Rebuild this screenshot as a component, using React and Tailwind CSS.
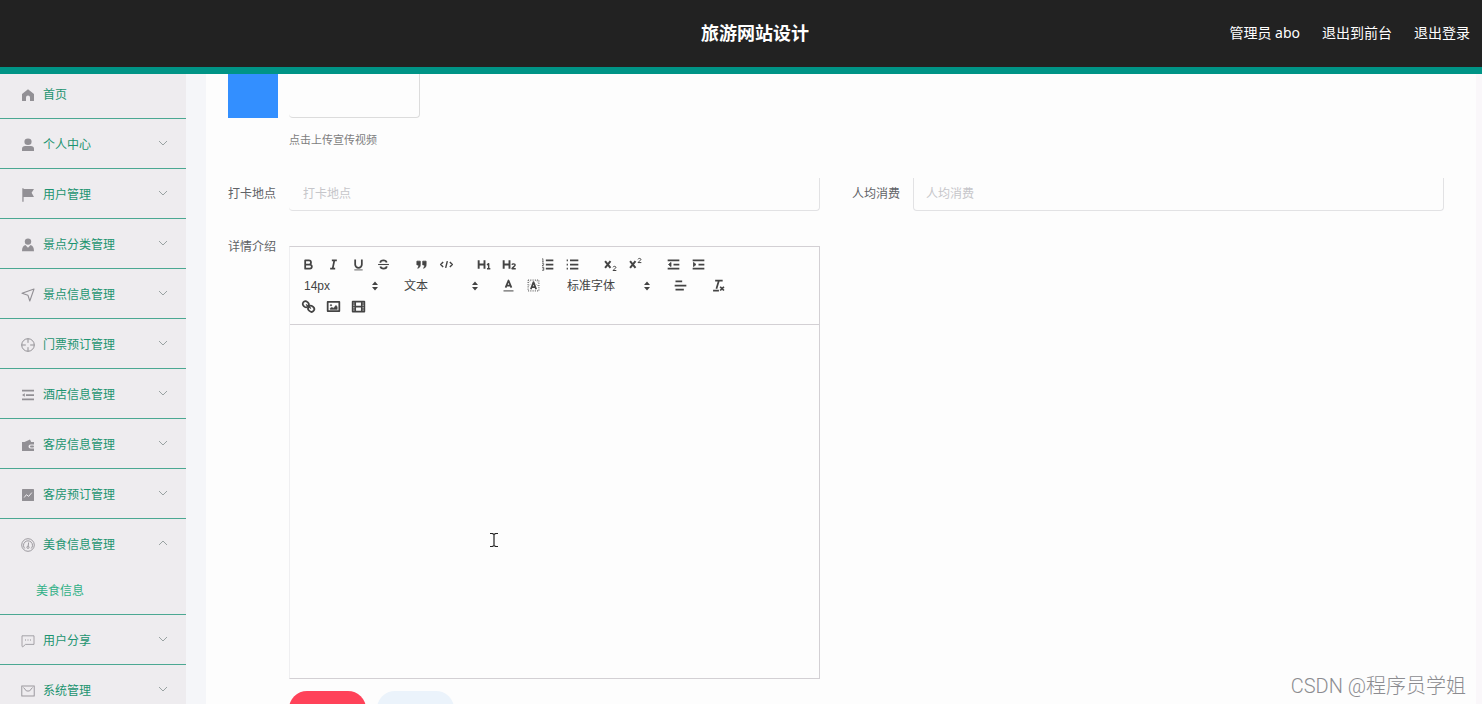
import React, { useState } from 'react';

const icons = {
  home: (
    <path d="M7 1.2 13 6v6.4a.6.6 0 0 1-.6.6H9V9.4a2 2 0 0 0-4 0V13H1.6a.6.6 0 0 1-.6-.6V6z" fill="currentColor" />
  ),
  user: (
    <g fill="currentColor">
      <ellipse cx="7" cy="3.8" rx="3.6" ry="3.2" />
      <path d="M1 13v-2.2C1 9 2.3 8 4.2 8h5.6C11.7 8 13 9 13 10.8V13z" />
    </g>
  ),
  flag: <path d="M1.3.3h1.3v.6h10.400L10.600 4.800l2.400 4.100h-10.400v4.900H1.300z" fill="currentColor" />,
  custom: (
    <g fill="currentColor">
      <circle cx="7" cy="3.600" r="3.200" />
      <path d="M4.400 7 7 9.800 9.600 7c2.200.6 3.400 2.600 3.400 6.300H1c0-3.700 1.200-5.700 3.400-6.300z" />
    </g>
  ),
  position: (
    <path d="M13 1 8.800 13 6.900 7.200 1 5.300z" fill="none" stroke="currentColor" strokeWidth="1.1" strokeLinejoin="round" />
  ),
  aim: (
    <g fill="none" stroke="currentColor" strokeWidth="1">
      <circle cx="7" cy="7" r="6.300" />
      <path d="M7 .8v4M7 9.200v4M.8 7h4M9.200 7h4" />
    </g>
  ),
  fold: (
    <g fill="currentColor">
      <path d="M1 1.800h12v1.700H1zM5 6.200h8v1.700H5zM1 10.500h12v1.700H1zM1 7l2.800-1.800v3.600z" />
    </g>
  ),
  wallet: (
    <g fill="currentColor">
      <path d="M1 4h2.500L9 1.500 10.200 4H13v2.500H9.500a2 2 0 0 0 0 4H13V13H1z" />
      <rect x="9" y="7.500" width="4" height="2" rx="1" />
    </g>
  ),
  chart: (
    <g>
      <rect x="1" y="1" width="12" height="12" rx="0.6" fill="currentColor" />
      <path d="M3.200 9.500 5.400 6.700 7.700 8.400 10.800 4.600" fill="none" stroke="#eeecef" strokeWidth="1" />
    </g>
  ),
  gauge: (
    <g fill="none" stroke="currentColor" strokeWidth="0.9">
      <circle cx="7" cy="7" r="6.300" />
      <path d="M3.800 10.500a4.500 4.500 0 1 1 6.400 0" />
      <path d="M7.600 4.500 7.200 8" />
      <circle cx="7" cy="9.300" r="1.100" />
    </g>
  ),
  chat: (
    <g fill="none" stroke="currentColor" strokeWidth="0.8">
      <path d="M1 1.800h12v8.600H4.500L1.800 12.800 1 12.400z" />
      <path d="M4 6h1M6.500 6h1M9 6h1" strokeWidth="1.200" />
    </g>
  ),
  mail: (
    <g fill="none" stroke="currentColor" strokeWidth="0.9">
      <rect x="0.800" y="2" width="12.400" height="10" />
      <path d="M2.500 3.500 5.500 7h3l3-3.500" />
    </g>
  ),
};

const menu = [
  { title: '首页', icon: 'home' },
  { title: '个人中心', icon: 'user', children: [] },
  { title: '用户管理', icon: 'flag', children: [] },
  { title: '景点分类管理', icon: 'custom', children: [] },
  { title: '景点信息管理', icon: 'position', children: [] },
  { title: '门票预订管理', icon: 'aim', children: [] },
  { title: '酒店信息管理', icon: 'fold', children: [] },
  { title: '客房信息管理', icon: 'wallet', children: [] },
  { title: '客房预订管理', icon: 'chart', children: [] },
  { title: '美食信息管理', icon: 'gauge', children: ['美食信息'] },
  { title: '用户分享', icon: 'chat', children: [] },
  { title: '系统管理', icon: 'mail', children: [] },
];

// toolbar glyphs, drawn on an 18 x 18 grid
const tools = {
  bold: (
    <path d="M5 4h4.500a2.500 2.500 0 0 1 0 5H5zM5 9h5.500a2.500 2.500 0 0 1 0 5H5z" />
  ),
  italic: <path d="M7 4h6M5 14h6M8 14l2-10" />,
  underline: (
    <g>
      <path d="M5 3v6a4 4 0 0 0 8 0V3" />
      <path d="M4 15.500h10" strokeWidth="1" />
    </g>
  ),
  strike: (
    <g>
      <path d="M2.500 9h13" strokeWidth="1.300" />
      <path d="M12.800 6.500C12.300 4.800 11 4 9 4 6.500 4 5.200 5.200 5.200 6.800M5.200 11.500c.5 1.700 1.800 2.500 3.800 2.500 2.500 0 3.800-1.200 3.800-2.800" />
    </g>
  ),
  quote: (
    <g fill="currentColor" strokeWidth="1">
      <path d="M3.500 5h4v4c0 2.500-1 4-3 4.500 1-1.500 1.200-2.800 1-4h-2zM10.500 5h4v4c0 2.500-1 4-3 4.500 1-1.500 1.200-2.800 1-4h-2z" />
    </g>
  ),
  code: <path d="M5 6 2 9l3 3M13 6l3 3-3 3M10 5 8 13" strokeWidth="1.700" />,
  h1: (
    <g>
      <path d="M2 4v10M9 4v10M2 9h7" strokeWidth="2.300" />
      <path d="M12 9.500 14 8v6M12 14h4" strokeWidth="1.700" />
    </g>
  ),
  h2: (
    <g>
      <path d="M2 4v10M9 4v10M2 9h7" strokeWidth="2.300" />
      <path d="M12 9.300c.3-1.500 3.800-1.500 3.800.4C15.800 11 12.500 12.500 12 14h4.500" strokeWidth="1.700" />
    </g>
  ),
  ordered: (
    <g>
      <path d="M7 4h9M7 9h9M7 14h9" />
      <path d="M2.500 2.500 3.500 2v4M2.500 6h2M2.500 8h2v1l-2 1.500h2M2.500 12.500h2v3.500h-2M3 14.300h1.500" strokeWidth="0.900" />
    </g>
  ),
  bullet: <path d="M6 4h10M6 9h10M6 14h10M2 4h1.500M2 9h1.500M2 14h1.500" />,
  sub: (
    <g>
      <path d="M2.500 5l6.500 8M9 5l-6.500 8" strokeWidth="2.400" />
      <path d="M12 12.300c.3-1.500 3.500-1.500 3.500.2 0 1.300-3 2.200-3.500 3.700h4" strokeWidth="1.200" />
    </g>
  ),
  sup: (
    <g>
      <path d="M2.500 5l6.500 8M9 5l-6.500 8" strokeWidth="2.400" />
      <path d="M12 2.800c.3-1.500 3.500-1.500 3.500.2 0 1.300-3 2.200-3.500 3.700h4" strokeWidth="1.200" />
    </g>
  ),
  outdent: (
    <g>
      <path d="M2 4h14M9 9h7M2 14h14" />
      <path d="M6 6.500V11.500L3 9z" fill="currentColor" strokeWidth="1" />
    </g>
  ),
  indent: (
    <g>
      <path d="M2 4h14M9 9h7M2 14h14" />
      <path d="M3 6.500V11.500L6 9z" fill="currentColor" strokeWidth="1" />
    </g>
  ),
  color: (
    <g>
      <path d="M5.500 11.500 9 3l3.500 8.500M6.800 9h4.400" />
      <path d="M3 15.500h12" strokeWidth="1.200" />
    </g>
  ),
  background: (
    <g>
      <rect x="2.500" y="2.500" width="13" height="13" strokeWidth="1.200" strokeDasharray="1.200 1.500" />
      <path d="M3 5.500 6 3M3 9.500 6 7M12 3l3 3M12 7l3 3" strokeWidth="0.800" strokeDasharray="1 1" />
      <path d="M5.800 13.500 9 5l3.200 8.500M7 11h4" />
    </g>
  ),
  align: <path d="M3 4h8M2 9h14M3 14h10" />,
  clean: (
    <g>
      <path d="M5 3h9M6.500 13 9.500 3M2.500 15h7" />
      <path d="M11 10.500 15.500 15M15.500 10.500 11 15" />
    </g>
  ),
  link: (
    <g>
      <rect x="2" y="3" width="7.500" height="6.500" rx="3.200" transform="rotate(40 5.700 6.200)" />
      <rect x="8.500" y="8.500" width="7.500" height="6.500" rx="3.200" transform="rotate(40 12.200 11.700)" />
      <path d="M6 6.500 12 11.500" strokeWidth="1.500" />
    </g>
  ),
  image: (
    <g>
      <rect x="2" y="3.500" width="14" height="11" />
      <circle cx="6" cy="7.500" r="0.800" fill="currentColor" strokeWidth="0.800" />
      <path d="M5 12.500v-1.500l2-1 2 1 3-3.500 1.500 2v3z" fill="currentColor" strokeWidth="0.500" />
    </g>
  ),
  video: (
    <g>
      <rect x="2" y="3" width="14" height="12" />
      <path d="M5 3v12M13 3v12M5 9h8" />
      <path d="M2 6h3M2 9h3M2 12h3M13 6h3M13 9h3M13 12h3" strokeWidth="1" />
    </g>
  ),
};

function ToolGroup({ names }) {
  return (
    <div className="flex">
      {names.map((name) => (
        <button key={name} type="button" aria-label={name} className="flex h-[21px] w-[25px] items-center justify-center">
          <svg
            viewBox="0 0 18 18"
            className="h-[15px] w-[15px]"
            fill="none"
            stroke="currentColor"
            strokeWidth="2.100"
            strokeLinejoin="round"
          >
            {tools[name]}
          </svg>
        </button>
      ))}
    </div>
  );
}

function Picker({ label, options, wide }) {
  return (
    <div className={`relative h-[21px] ${wide ? 'w-[96px]' : 'w-[87px]'}`}>
      <select aria-label={label} className="h-full w-full appearance-none bg-transparent pl-2 text-xs outline-none">
        {options.map((o) => (
          <option key={o}>{o}</option>
        ))}
      </select>
      <svg viewBox="0 0 8 10" className="pointer-events-none absolute right-1 top-1.5 h-2.5 w-2" fill="currentColor">
        <path d="M4 .5 7 4H1zM4 9.500 7 6H1z" />
      </svg>
    </div>
  );
}

function Sidebar() {
  const [open, setOpen] = useState('美食信息管理');

  return (
    <aside className="w-[186px] shrink-0 overflow-hidden bg-[#eeecef]">
      <ul className="-mt-[5px]">
        {menu.map((item) => {
          const isOpen = open === item.title;
          return (
            <li key={item.title} className="border-b border-[#4ba892] text-xs text-[#1c9470]">
              <button
                type="button"
                onClick={() => setOpen(isOpen ? '' : item.title)}
                className="flex h-[49px] w-full items-center gap-2 pl-[21px] pr-[18px] pt-0.5 text-left"
              >
                <svg viewBox="0 0 14 14" className="h-3.5 w-3.5 text-[#929095]">
                  {icons[item.icon]}
                </svg>
                <span className="flex-1">{item.title}</span>
                {item.children && (
                  <svg
                    viewBox="0 0 10 10"
                    className="mb-1 h-2.5 w-2.5 text-[#8f9a98]"
                    fill="none"
                    stroke="currentColor"
                    strokeWidth="0.9"
                  >
                    <path d={isOpen ? 'M1 7 5 3 9 7' : 'M1 3 5 7 9 3'} />
                  </svg>
                )}
              </button>
              {isOpen && item.children?.map((child) => (
                <a key={child} href="#food" className="flex h-[46px] items-center pl-9 text-[#2fb086]">
                  {child}
                </a>
              ))}
            </li>
          );
        })}
      </ul>
    </aside>
  );
}

export default function App() {
  return (
    <div className="relative flex h-screen flex-col overflow-hidden bg-[#fdfdfd] font-['Noto_Sans','Noto_Sans_CJK_SC',sans-serif]">
      <header className="flex h-[74px] shrink-0 items-center border-b-[7px] border-[#009486] bg-[#222] pb-0.5 pl-10 pr-3 text-white">
        <div className="flex-1" />
        <h1 className="text-lg font-bold">旅游网站设计</h1>
        <div className="flex flex-1 justify-end gap-[22px] text-sm">
          <span>管理员 abo</span>
          <a href="#front">退出到前台</a>
          <a href="#logout">退出登录</a>
        </div>
      </header>

      <div className="flex min-h-0 flex-1">
        <Sidebar />

        <main className="min-w-0 flex-1 overflow-hidden border-l-[20px] border-r-[6px] border-l-[#f5f6f9] border-r-[#faf7fa] pl-[22px] pr-8 text-xs text-[#606266]">
          <form>
            <div className="flex gap-[11px]">
              <div className="h-11 w-[50px] bg-[#338fff]" />
              <div>
                <button
                  type="button"
                  aria-label="上传宣传视频"
                  className="block h-11 w-[131px] rounded-b border-b border-r border-[#dcdcdc]"
                />
                <p className="mt-3.5 text-[11px] leading-4 text-[#7d7d80]">点击上传宣传视频</p>
              </div>
            </div>

            <div className="mt-[30px] grid grid-cols-2 gap-x-8">
              <div className="flex items-start gap-[11px]">
                <label htmlFor="place" className="w-[50px] leading-8">打卡地点</label>
                <input
                  id="place"
                  type="text"
                  placeholder="打卡地点"
                  className="h-[33px] min-w-0 flex-1 rounded-b border-b border-r border-[#e2e2e4] px-3.5 pb-0.5 outline-none placeholder:text-[#c6c6ca]"
                />
              </div>
              <div className="flex items-start gap-[11px]">
                <label htmlFor="cost" className="w-[50px] leading-8">人均消费</label>
                <input
                  id="cost"
                  type="text"
                  placeholder="人均消费"
                  className="h-[33px] min-w-0 flex-1 rounded-b border-x border-b border-[#e2e2e4] px-3 pb-0.5 outline-none placeholder:text-[#c6c6ca]"
                />
              </div>
            </div>

            <div className="mt-[25px] grid grid-cols-2 gap-x-8">
              <div className="flex items-start gap-[11px]">
                <label htmlFor="detail" className="w-[50px] leading-[22px]">详情介绍</label>
                <div className="relative mt-2.5 min-w-0 flex-1 border border-[#d3d0d4] border-l-[#efeff1]">
                  <div className="flex flex-wrap gap-x-[13px] border-b border-[#d3d0d4] py-[7px] pl-1.5 pr-3 font-['Liberation_Sans','Noto_Sans_CJK_SC',sans-serif] text-[#444]">
                    <ToolGroup names={['bold', 'italic', 'underline', 'strike']} />
                    <ToolGroup names={['quote', 'code']} />
                    <ToolGroup names={['h1', 'h2']} />
                    <ToolGroup names={['ordered', 'bullet']} />
                    <ToolGroup names={['sub', 'sup']} />
                    <ToolGroup names={['outdent', 'indent']} />
                    <Picker label="字号" options={['14px', '16px', '18px']} />
                    <Picker label="标题" options={['文本', '标题1', '标题2']} />
                    <ToolGroup names={['color', 'background']} />
                    <Picker label="字体" options={['标准字体', '衬线字体', '等宽字体']} wide />
                    <ToolGroup names={['align']} />
                    <ToolGroup names={['clean']} />
                    <ToolGroup names={['link', 'image', 'video']} />
                  </div>
                  <textarea id="detail" className="block h-[353px] w-full resize-none px-3 py-2 outline-none" />
                  <svg
                    viewBox="0 0 10 16"
                    className="pointer-events-none absolute left-[199px] top-[285px] h-4 w-2.5"
                    fill="none"
                    stroke="#222"
                    strokeWidth="1.2"
                  >
                    <path d="M1 1.500h2.500L5 2.500l1.500-1H9M1 14.500h2.500l1.500-1 1.500 1H9M5 2.500v11" />
                  </svg>
                </div>
              </div>
            </div>

            <div className="mt-3 flex gap-[11px] pl-[61px]">
              <button type="submit" aria-label="提交" className="h-9 w-[77px] rounded-full bg-[#ff4259]" />
              <button type="button" aria-label="取消" className="h-9 w-[77px] rounded-full bg-[#ebf3fb]" />
            </div>
          </form>
        </main>
      </div>

      <p className="pointer-events-none absolute bottom-1 right-4 font-['Roboto','Noto_Sans_CJK_SC',sans-serif] text-xl font-light text-[#8c8c90]">
        CSDN @程序员学姐
      </p>
    </div>
  );
}
